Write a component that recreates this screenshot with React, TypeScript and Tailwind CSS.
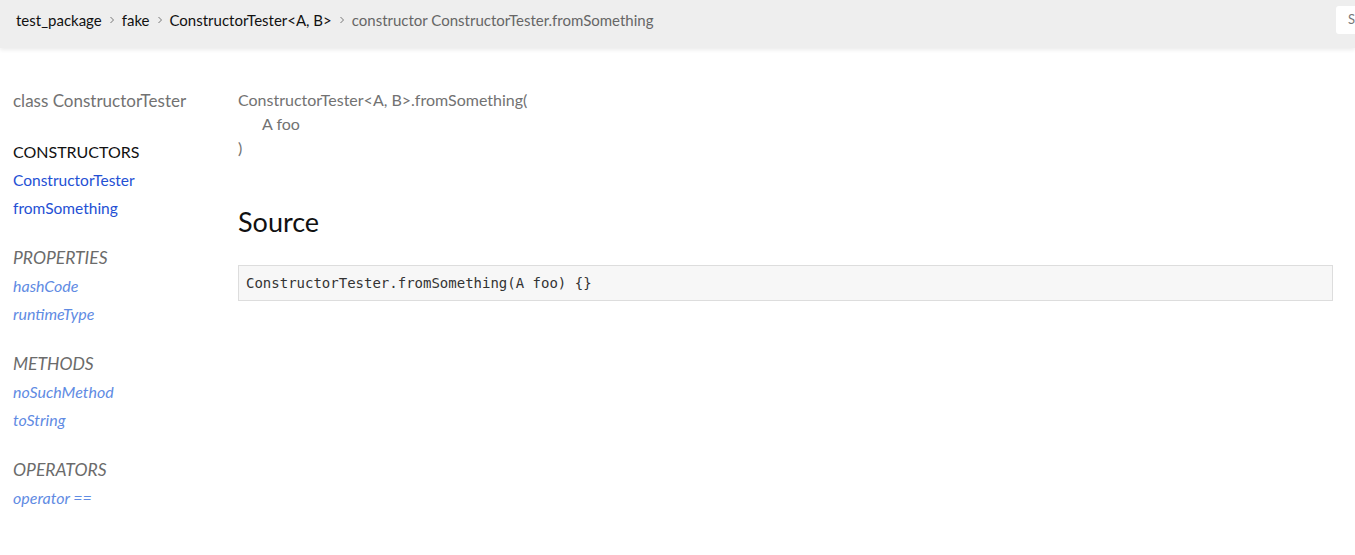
import React from "react";

const sans = "font-['Lato','Liberation_Sans',sans-serif]";

function Chevron() {
  return (
    <svg width="8" height="10" viewBox="0 0 8 10" className="mx-[6px]">
      <path d="M2.5 2 L5.5 5 L2.5 8" fill="none" stroke="#777" strokeWidth="1" />
    </svg>
  );
}

function Section({ title, items, italic, first }: { title: string; items: string[]; italic?: boolean; first?: boolean }) {
  return (
    <div className={first ? "mt-[25px]" : "mt-[22px]"}>
      <div className={`leading-[28px] ${italic ? "italic text-[#6b6b6b] text-[17.5px]" : "text-[16px] text-[#111]"}`}>{title}</div>
      {items.map((i) => (
        <div
          key={i}
          className={`leading-[28px] ${italic ? "italic text-[16px] text-[#5f8be3]" : "text-[15.5px] text-[#2450d4]"}`}
        >
          {i}
        </div>
      ))}
    </div>
  );
}

export default function App() {
  return (
    <div className={`w-[1355px] h-[555px] bg-white overflow-hidden ${sans}`}>
      <header className="h-[48px] bg-[#eeeeee] shadow-[0_2px_4px_rgba(0,0,0,0.08)] flex items-start justify-between relative z-10">
        <div className="flex items-center pl-[16px] pt-[10px] h-[30px] text-[15px] text-[#111]">
          <span>test_package</span>
          <Chevron />
          <span>fake</span>
          <Chevron />
          <span>ConstructorTester&lt;A, B&gt;</span>
          <Chevron />
          <span className="text-[#666]">constructor ConstructorTester.fromSomething</span>
        </div>
        <div className="mt-[6px] w-[40px] h-[28px] bg-white rounded-l-[3px] mr-[-21px] flex items-center pl-[12px] text-[13px] text-[#777] overflow-hidden">
          S
        </div>
      </header>
      <div className="flex">
        <aside className="w-[238px] shrink-0 pl-[13px] pt-[41px]">
          <div className="text-[17px] leading-[24px] text-[#727272]">class ConstructorTester</div>
          <Section title="CONSTRUCTORS" items={["ConstructorTester", "fromSomething"]} first />
          <Section title="PROPERTIES" items={["hashCode", "runtimeType"]} italic />
          <Section title="METHODS" items={["noSuchMethod", "toString"]} italic />
          <Section title="OPERATORS" items={["operator =="]} italic />
        </aside>
        <main className="flex-1 pr-[22px] pt-[40px]">
          <div className="text-[16px] leading-[24px] text-[#727272]">
            <div>ConstructorTester&lt;A, B&gt;.fromSomething(</div>
            <div className="pl-[24px]">A foo</div>
            <div>)</div>
          </div>
          <h2 className="mt-[44px] text-[27px] leading-[36px] text-[#111]">Source</h2>
          <div className="mt-[25px] bg-[#f7f7f7] border border-[#dddddd] h-[36px] flex items-center pl-[7px] font-['DejaVu_Sans_Mono','Liberation_Mono',monospace] text-[14px] text-[#333]">
            ConstructorTester.fromSomething(A foo) {"{}"}
          </div>
        </main>
      </div>
    </div>
  );
}
